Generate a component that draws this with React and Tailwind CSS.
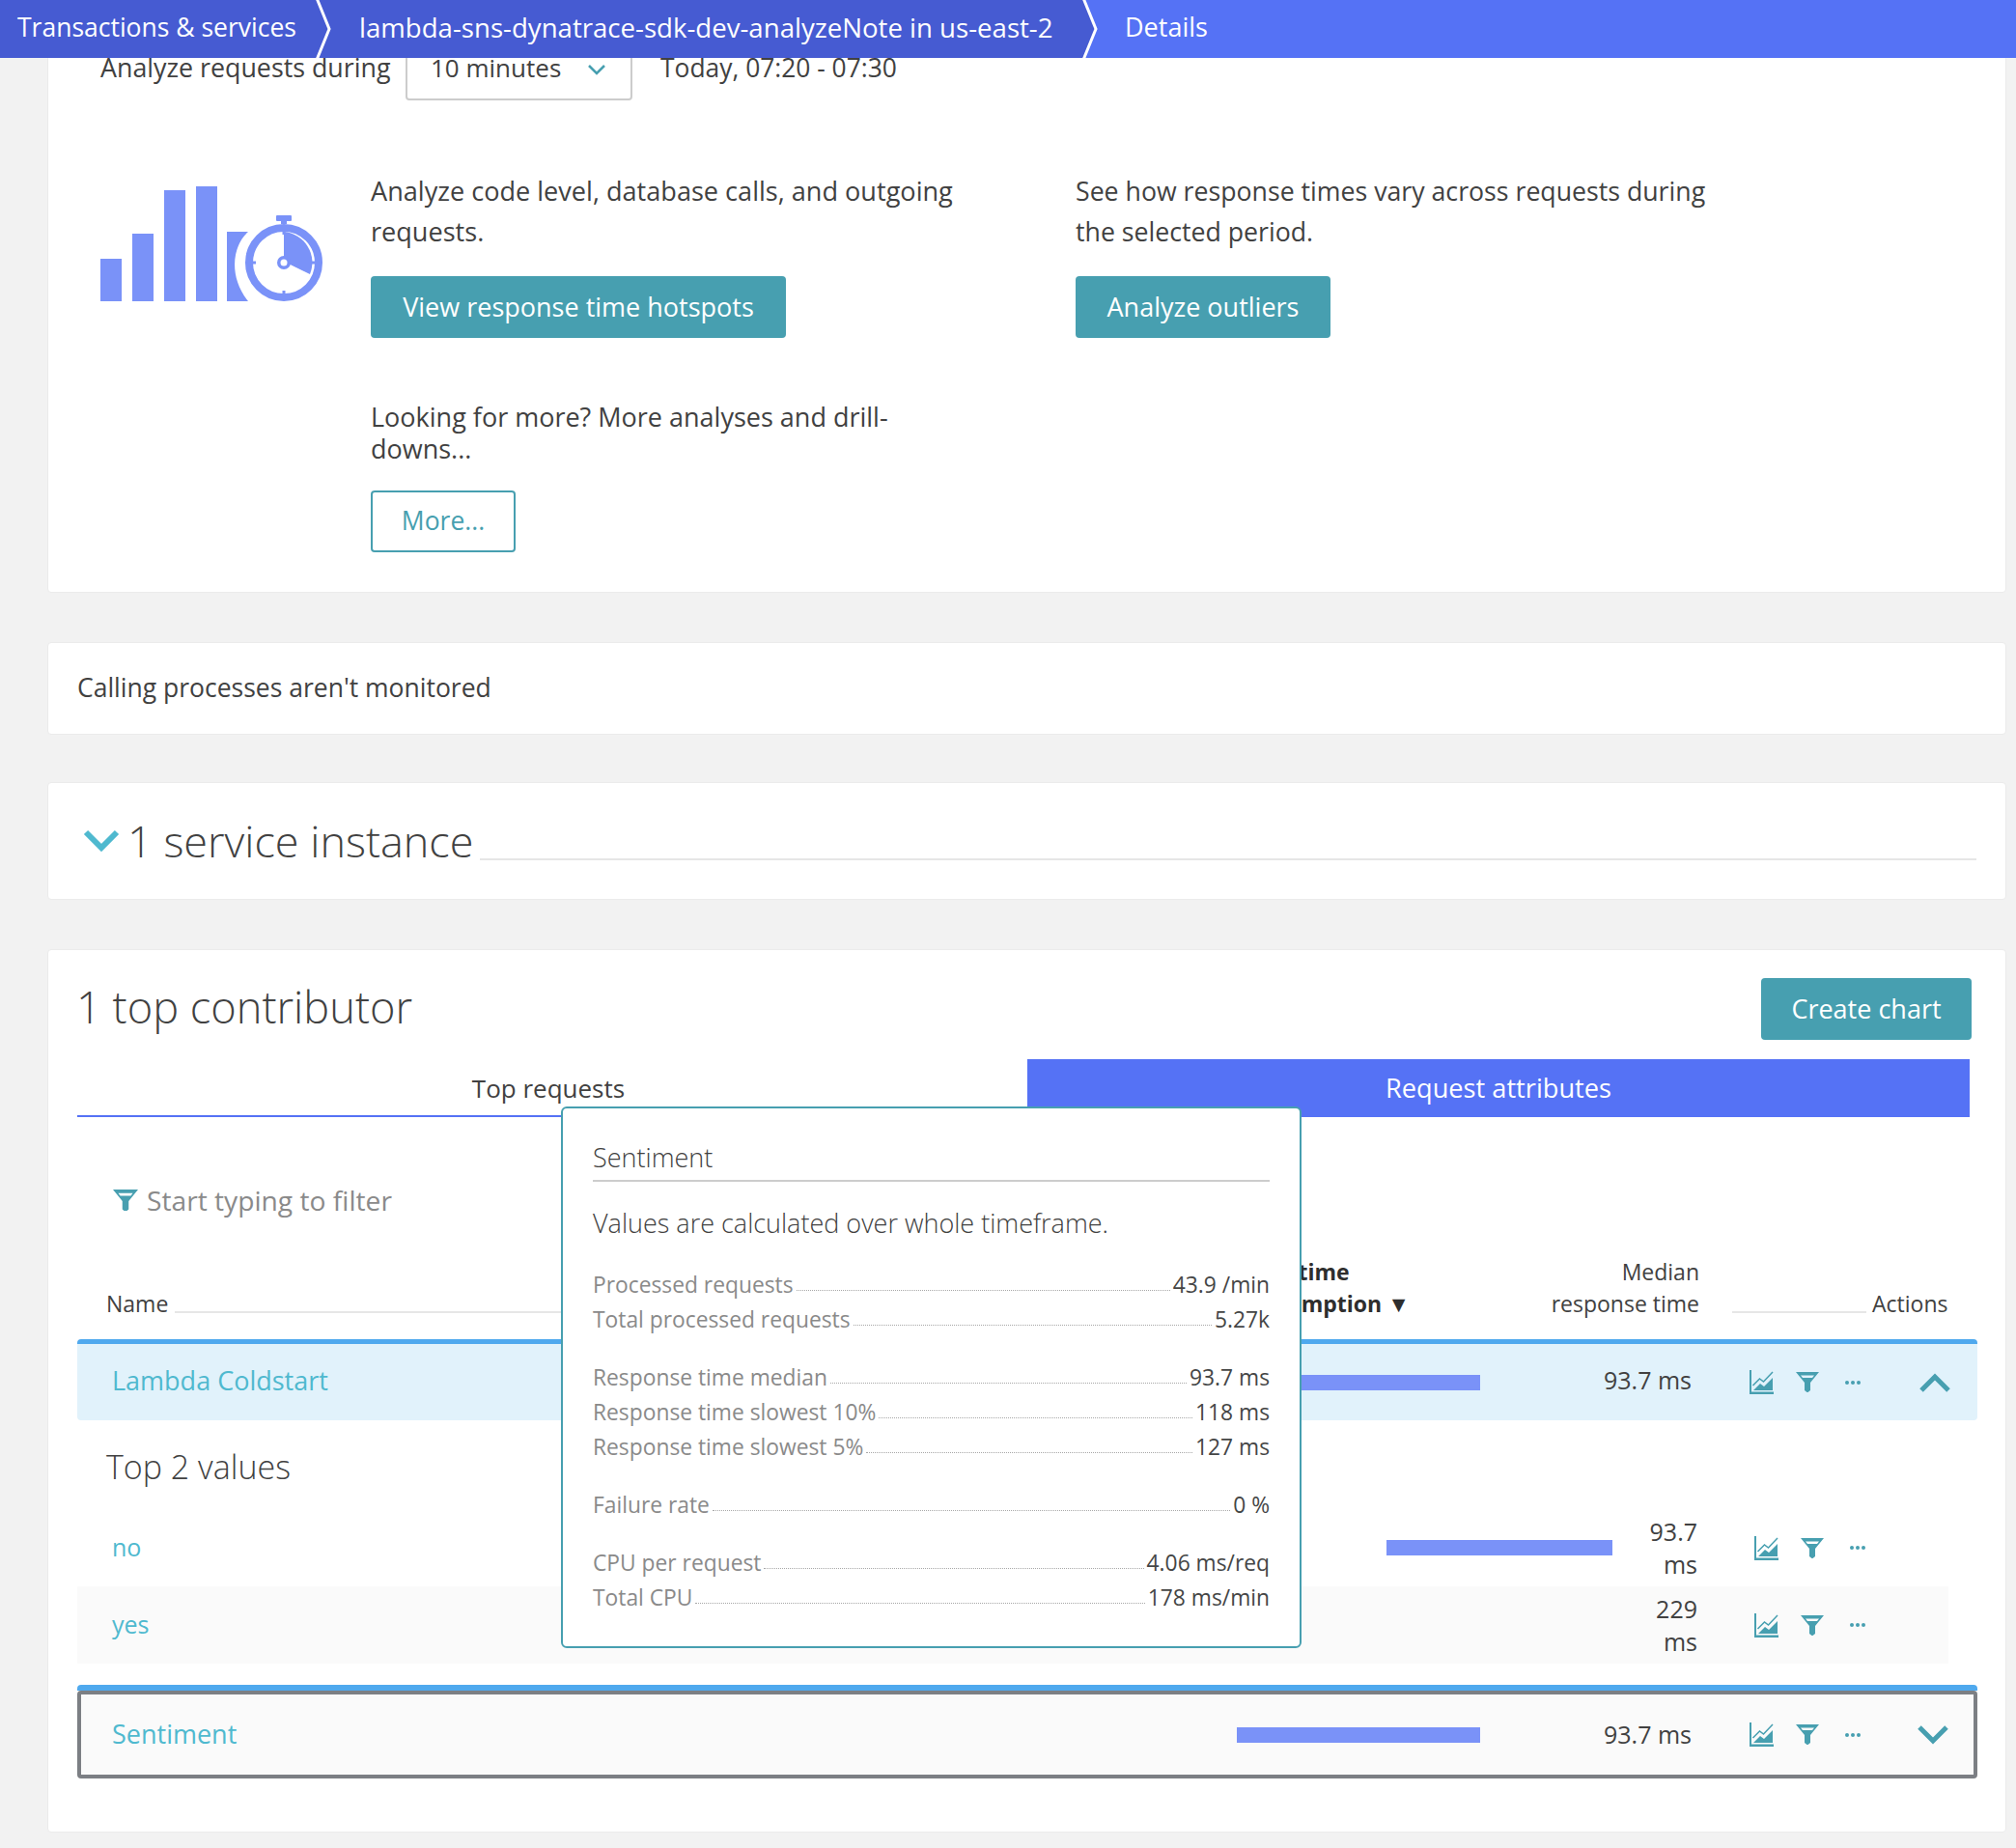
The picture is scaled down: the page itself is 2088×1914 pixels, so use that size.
const ff = "font-['Open_Sans','Noto_Sans',sans-serif]";

function Crumb({ className, textClass, children, arrow }) {
  return (
    <div className={`relative flex h-full flex-none items-center pb-[3px] ${className}`}>
      <span className={`whitespace-nowrap font-medium text-white ${textClass}`}>{children}</span>
      {arrow && (
        <svg className="absolute left-full top-0 z-10 -ml-[3px]" width="20" height="60" viewBox="0 0 20 60">
          <polygon points="0,0 3,0 16,30 3,60 0,60" fill="#465bd2" />
          <polyline points="3,-2 16,30 3,62" fill="none" stroke="#fff" strokeWidth="3" />
        </svg>
      )}
    </div>
  );
}

function ChartIcon() {
  return (
    <svg width="25" height="25" viewBox="0 0 25 25" className="flex-none" fill="#479fb0">
      <path d="M0 0h2v22.5h23V25H0z" />
      <polygon points="4,21 11,14 15,17 24,8 24,21" />
      <polyline points="3.5,16 10.5,9 14.5,12 24,2" fill="none" stroke="#479fb0" strokeWidth="1.5" />
    </svg>
  );
}
function FunnelIcon({ size = 24 }) {
  return (
    <svg width={size} height={size * 0.875} viewBox="0 0 24 21" className="flex-none" fill="#479fb0">
      <path fillRule="evenodd" d="M0 0h24L15 11v8l-2.5 2h-1L9 19v-8zM5 3.5l2 2.5h10l2-2.5z" />
    </svg>
  );
}
function Dots() {
  return (
    <svg width="24" height="6" viewBox="0 0 24 6" className="flex-none" fill="#479fb0">
      <circle cx="6" cy="3" r="2" />
      <circle cx="12" cy="3" r="2" />
      <circle cx="18" cy="3" r="2" />
    </svg>
  );
}
function Chevron({ up, color = "#479fb0" }) {
  return (
    <svg width="32" height="20" viewBox="0 0 32 20" className="flex-none">
      <polyline points={up ? "2,18 16,4 30,18" : "2,2 16,16 30,2"} fill="none" stroke={color} strokeWidth="5" />
    </svg>
  );
}
function Actions() {
  return (
    <div className="flex items-center gap-[23px]">
      <ChartIcon />
      <FunnelIcon />
      <Dots />
    </div>
  );
}
function Bar({ className }) {
  return <div className={`h-[16px] flex-none bg-[#7a92f8] ${className}`} />;
}
function Card({ className, children }) {
  return (
    <section className={`rounded-[4px] border border-[#ebebeb] bg-white ${className}`}>{children}</section>
  );
}
function TealButton({ className, children }) {
  return (
    <button className={`flex h-[64px] items-center justify-center rounded-[4px] bg-[#479fb0] text-[27px] font-medium text-white ${className}`}>
      {children}
    </button>
  );
}
function Stat({ label, value }) {
  return (
    <div className="flex h-[36px] items-center text-[22.8px]">
      <span className="whitespace-nowrap text-[#8a8a8a]">{label}</span>
      <span className="mx-[3px] mt-[10px] h-0 flex-1 border-b border-dotted border-[#a8a8a8]" />
      <span className="whitespace-nowrap text-[#454646]">{value}</span>
    </div>
  );
}

export default function App() {
  return (
    <div className={`min-h-[1914px] bg-[#f2f2f2] text-[#414141] ${ff}`}>
      <header className="relative z-10 flex h-[60px] bg-[#5572f5]">
        <Crumb className="w-[328px] bg-[#465bd2] pl-[18px]" textClass="text-[26.5px]" arrow>Transactions &amp; services</Crumb>
        <Crumb className="w-[794px] bg-[#465bd2] pl-[44px]" textClass="text-[27.6px]" arrow>lambda-sns-dynatrace-sdk-dev-analyzeNote in us-east-2</Crumb>
        <Crumb className="pl-[43px]" textClass="text-[27px]">Details</Crumb>
      </header>

      <main className="-mt-[40px] flex flex-col gap-[51px] pl-[49px] pr-[10px]">
        <Card className="h-[594px] px-[54px] pt-[19px]">
          <div className="flex h-[64px] items-center text-[26.8px]">
            <span className="w-[316px] whitespace-nowrap pb-[3px]">Analyze requests during</span>
            <div className="flex h-[64px] w-[235px] items-center rounded-[4px] border-2 border-[#cccccc] pl-[24px]">
              <span className="w-[163px] whitespace-nowrap pb-[3px] text-[26px]">10 minutes</span>
              <svg width="18" height="11" viewBox="0 0 18 11">
                <polyline points="1,1 9,9 17,1" fill="none" stroke="#479fb0" strokeWidth="2.5" />
              </svg>
            </div>
            <span className="ml-[29px] whitespace-nowrap pb-[3px] text-[26.4px]">Today, 07:20 - 07:30</span>
          </div>

          <div className="mt-[73px] flex">
            <svg width="232" height="124" viewBox="0 0 232 124" className="mt-[16px] flex-none" fill="#7a92f8">
              <rect x="0" y="75" width="22" height="44" />
              <rect x="33" y="49" width="22" height="70" />
              <rect x="66" y="4" width="22" height="115" />
              <rect x="99" y="0" width="22" height="119" />
              <path d="M131 47h22c-16 14-21 46 0 72h-22z" />
              <rect x="182" y="30" width="16" height="6" rx="1" />
              <rect x="187" y="33" width="6" height="6" />
              <circle cx="190" cy="79" r="36" fill="none" stroke="#7a92f8" strokeWidth="8" />
              <path d="M190 47a32 32 0 0 1 27 44l-27-13z" />
              <path d="M190 79l27 14-31-8z" fill="#fff" stroke="#fff" strokeWidth="2" />
              <circle cx="190" cy="79" r="7" fill="#7a92f8" />
              <circle cx="190" cy="79" r="3.5" fill="#fff" />
              <rect x="188.5" y="43" width="3" height="7" />
              <rect x="188.5" y="108" width="3" height="7" />
              <rect x="154" y="77.5" width="7" height="3" />
              <rect x="219" y="77.5" width="7" height="3" />
            </svg>
            <div className="ml-[48px] w-[730px] flex-none">
              <p className="w-[640px] text-[27.1px] leading-[42px]">Analyze code level, database calls, and outgoing requests.</p>
              <TealButton className="mt-[25px] w-[430px]">View response time hotspots</TealButton>
              <p className="mt-[65px] w-[600px] text-[27px] leading-[33px]">Looking for more? More analyses and drill-downs...</p>
              <button className="mt-[27px] flex h-[64px] w-[150px] items-center justify-center rounded-[4px] border-2 border-[#479fb0] text-[26.5px] font-medium text-[#479fb0]">More...</button>
            </div>
            <div className="flex-none">
              <p className="w-[680px] text-[26.7px] leading-[42px]">See how response times vary across requests during the selected period.</p>
              <TealButton className="mt-[25px] w-[264px]">Analyze outliers</TealButton>
            </div>
          </div>
        </Card>

        <Card className="flex h-[96px] items-center pl-[30px] text-[26.5px]">Calling processes aren't monitored</Card>

        <Card className="-mt-[2px] flex h-[122px] items-center pl-[36px] pr-[30px]">
          <svg width="38" height="24" viewBox="0 0 38 24" className="flex-none">
            <polyline points="3,3 19,19 35,3" fill="none" stroke="#4fb9cf" strokeWidth="6" />
          </svg>
          <h2 className="ml-[8px] whitespace-nowrap text-[45px] font-light">1 service instance</h2>
          <div className="ml-[7px] mt-[38px] h-[2px] flex-1 bg-[#e6e6e6]" />
        </Card>

        <Card className="relative h-[915px] pl-[30px] pr-[29px] pt-[29px]">
          <div className="flex h-[64px] items-center justify-between">
            <h2 className="-ml-[1px] pb-[4px] text-[45.2px] font-light">1 top contributor</h2>
            <TealButton className="mr-[6px] w-[218px]">Create chart</TealButton>
          </div>
          <div className="mt-[20px] flex h-[60px] w-[1960px]">
            <div className="flex w-[984px] items-center justify-center border-b-2 border-[#5572f5] pr-[8px] pt-[3px] text-[26px]">Top requests</div>
            <div className="flex flex-1 items-center justify-center bg-[#5572f5] pt-[1px] text-[27.2px] font-medium text-white">Request attributes</div>
          </div>
          <div className="ml-[37px] mt-[66px] flex h-[40px] items-center gap-[9px] text-[28.2px] text-[#8a8a8a]">
            <FunnelIcon size={26} />
            <span>Start typing to filter</span>
          </div>
          <div className="mt-[38px] flex h-[66px] items-end text-[23px] leading-[33px]">
            <span className="ml-[30px] w-[64px]">Name</span>
            <div className="mb-[7px] ml-[7px] h-[2px] w-[900px] bg-[#e6e6e6]" />
            <div className="ml-[199px] w-[190px] whitespace-nowrap font-bold text-[#2e2e2e]">Total time<br />consumption ▼</div>
            <div className="w-[290px] text-right">Median<br />response time</div>
            <div className="mb-[7px] ml-[34px] h-[2px] w-[139px] bg-[#e6e6e6]" />
            <span className="ml-[6px]">Actions</span>
          </div>

          <div className="mt-[20px] flex h-[84px] items-center rounded-[4px] border-t-[5px] border-[#4fa9ee] bg-[#e1f2fb] pl-[36px]">
            <span className="flex-1 pb-[2px] text-[27px] font-medium text-[#4fb9cf]">Lambda Coldstart</span>
            <Bar className="w-[252px]" />
            <span className="w-[220px] pb-[3px] pr-[1px] text-right text-[25px]">93.7 ms</span>
            <div className="ml-[59px]"><Actions /></div>
            <div className="ml-[57px] mr-[28px]"><Chevron up /></div>
          </div>

          <h3 className="ml-[30px] mt-[18px] flex h-[60px] items-center text-[34px] font-light">Top 2 values</h3>

          <div className="mr-[30px] mt-[14px] flex h-[80px] items-center pl-[36px]">
            <span className="flex-1 pb-[1px] text-[25px] text-[#4fb9cf]">no</span>
            <Bar className="w-[234px]" />
            <span className="ml-[18px] w-[70px] text-right text-[25px] leading-[34px]">93.7 ms</span>
            <div className="ml-[59px] mr-[82px]"><Actions /></div>
          </div>
          <div className="mr-[30px] flex h-[80px] items-center bg-[#fafafa] pl-[36px]">
            <span className="flex-1 pb-[1px] text-[25px] text-[#4fb9cf]">yes</span>
            <span className="w-[70px] text-right text-[25px] leading-[34px]">229 ms</span>
            <div className="ml-[59px] mr-[82px]"><Actions /></div>
          </div>

          <div className="mt-[22px] rounded-t-[4px] border-t-[6px] border-[#4fa9ee]">
            <div className="flex h-[91px] items-center rounded-[4px] border-4 border-[#7c7f84] bg-[#fafafa] pl-[32px]">
              <span className="flex-1 pb-[1px] text-[27px] font-medium text-[#4fb9cf]">Sentiment</span>
              <Bar className="w-[252px]" />
              <span className="w-[220px] pr-[1px] text-right text-[25px]">93.7 ms</span>
              <div className="ml-[59px]"><Actions /></div>
              <div className="ml-[55px] mr-[26px]"><Chevron /></div>
            </div>
          </div>

          <div className="absolute left-[531px] top-[162px] z-20 h-[561px] w-[767px] rounded-[6px] border-2 border-[#479fb0] bg-white px-[31px] pt-[39px]">
            <div className="h-[24px] text-[27px] leading-[24px] font-light">Sentiment</div>
            <div className="mt-[11px] h-[2px] bg-[#cccccc]" />
            <p className="mt-[28px] text-[27px] font-light leading-[30px]">Values are calculated over whole timeframe.</p>
            <div className="mt-[31px]">
              <Stat label="Processed requests" value="43.9 /min" />
              <Stat label="Total processed requests" value="5.27k" />
            </div>
            <div className="mt-[24px]">
              <Stat label="Response time median" value="93.7 ms" />
              <Stat label="Response time slowest 10%" value="118 ms" />
              <Stat label="Response time slowest 5%" value="127 ms" />
            </div>
            <div className="mt-[24px]">
              <Stat label="Failure rate" value="0 %" />
            </div>
            <div className="mt-[24px]">
              <Stat label="CPU per request" value="4.06 ms/req" />
              <Stat label="Total CPU" value="178 ms/min" />
            </div>
          </div>
        </Card>
      </main>
    </div>
  );
}
